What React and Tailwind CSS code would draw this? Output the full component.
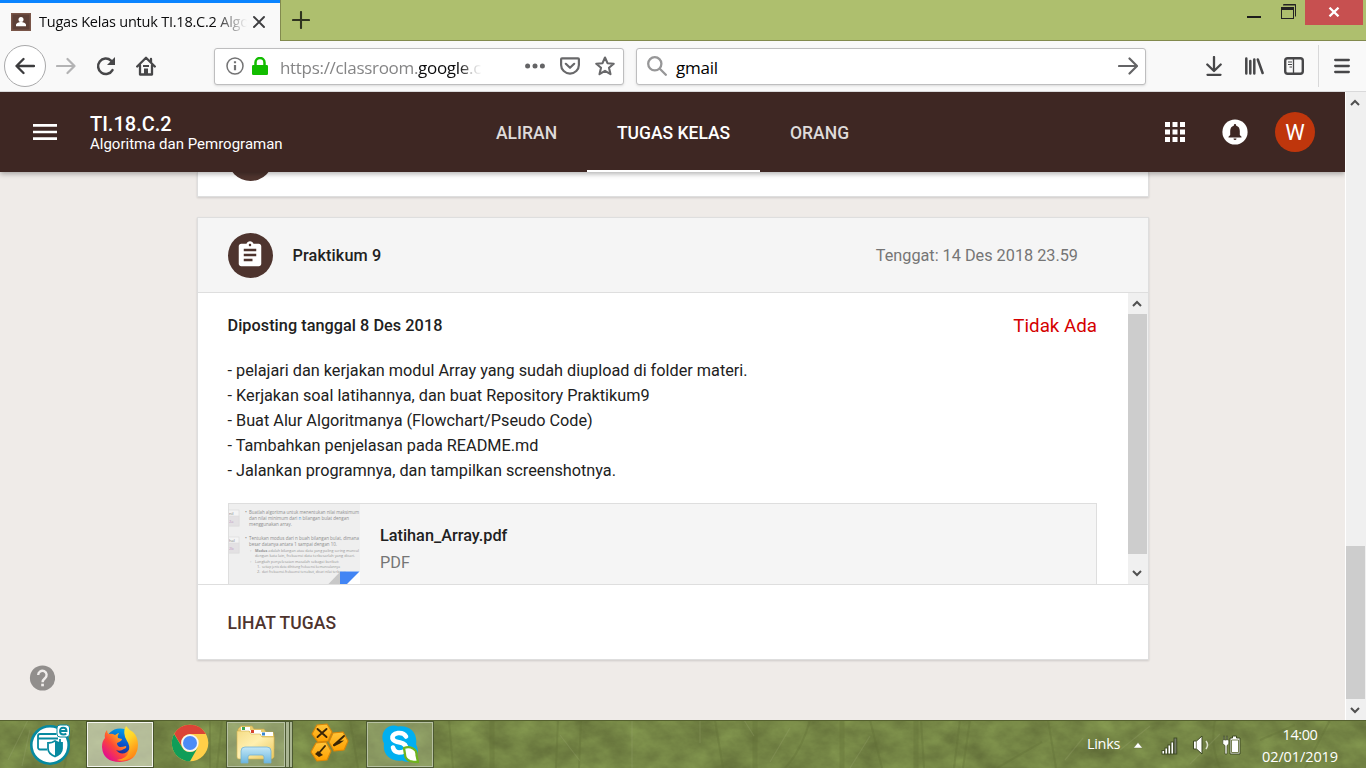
import React from "react";

function TabBar() {
  return (
    <div className="flex h-[41px] bg-[#aebf6e]">
      <div className="flex h-[41px] w-[280px] shrink-0 items-center border-t-[3px] border-[#0a84ff] bg-[#f9f9f9] pl-[11px]">
        <svg width="20" height="18" viewBox="0 0 20 18" className="shrink-0">
          <rect width="20" height="18" fill="#795548" />
          <rect x="1.5" y="1.5" width="17" height="15" fill="#5d4037" />
          <circle cx="10" cy="6.4" r="2.5" fill="#fff" />
          <path d="M5 13.2V12c0-2 3-3 5-3s5 1 5 3v1.200z" fill="#fff" />
        </svg>
        <div className="ml-2 w-[208px] whitespace-nowrap text-[14.5px] leading-5 tracking-[-0.22px] text-[#0c0c0d] [mask-image:linear-gradient(to_right,black_84%,transparent_100%)]">
          Tugas Kelas untuk TI.18.C.2 Algo
        </div>
        <svg width="14" height="14" viewBox="0 0 14 14" className="ml-[5px] shrink-0">
          <path d="M2 2l10 10M12 2L2 12" stroke="#3e3e40" strokeWidth="1.9" strokeLinecap="round" />
        </svg>
      </div>
      <div className="flex flex-1 items-start border-b border-l border-[#828a4e]">
        <svg width="18" height="18" viewBox="0 0 18 18" className="ml-[11px] mt-[11px]">
          <path d="M9 1v16M1 9h16" stroke="#2f331f" strokeWidth="2.1" strokeLinecap="round" />
        </svg>
        <div className="ml-auto flex items-start">
          <svg width="14" height="25" viewBox="0 0 14 25">
            <rect y="16" width="14" height="2" fill="#1d1d1b" />
          </svg>
          <svg width="16" height="25" viewBox="0 0 16 25" className="ml-5">
            <path d="M2.500 4.500h12v12M2 5h13" fill="none" stroke="#222" />
            <rect x=".5" y="7.500" width="12" height="11" fill="none" stroke="#222" />
            <rect x="0" y="7" width="13" height="3" fill="#222" />
          </svg>
          <div className="ml-2 mr-[3px] flex h-[25px] w-[58px] items-center justify-center bg-[#c75050]">
            <svg width="12" height="10" viewBox="0 0 12 10" className="-mt-px -ml-px">
              <path d="M1.500 .7l9 8.600M10.500 .7l-9 8.600" stroke="#fff" strokeWidth="2.300" />
            </svg>
          </div>
        </div>
      </div>
    </div>
  );
}

function Toolbar() {
  return (
    <div className="flex h-[51px] items-center border-b border-[#d9d9da] bg-[#f9f9f9]">
      <div className="ml-1 flex size-[42px] items-center justify-center rounded-full border border-[#a9a9aa] bg-white">
        <svg width="20" height="18" viewBox="0 0 20 18" fill="none" stroke="#3c3c3e" strokeWidth="2.300" strokeLinecap="round" strokeLinejoin="round">
          <path d="M19 9H1.500M8.500 2l-7 7 7 7" />
        </svg>
      </div>
      <svg width="20" height="18" viewBox="0 0 20 18" className="ml-[10px]" fill="none" stroke="#b3b3b4" strokeWidth="2.200" strokeLinecap="round" strokeLinejoin="round">
        <path d="M1 9h17.500M11.500 2l7 7-7 7" />
      </svg>
      <svg width="20" height="20" viewBox="0 0 20 20" className="ml-[20px]">
        <path d="M16.500 14.100A7.700 7.700 0 1 1 15 4.600l2 2" fill="none" stroke="#474749" strokeWidth="2.500" strokeLinecap="round" />
        <path d="M19 1v8h-8z" fill="#474749" />
      </svg>
      <svg width="20" height="20" viewBox="0 0 20 20" className="ml-5">
        <path d="M1.200 10.500L10 1.800l8.800 8.700M4 9.500v9h12v-9M15 3v3" fill="none" stroke="#474749" strokeWidth="2.300" strokeLinecap="round" strokeLinejoin="round" />
        <path d="M8 18v-5.500h4V18M7 9h6v2H7z" fill="#474749" />
      </svg>
      <div className="ml-[58px] flex h-[37px] w-[410px] items-center rounded-[3px] border border-[#bebebf] bg-white shadow-sm">
        <svg width="18" height="18" viewBox="0 0 18 18" className="ml-[11px] shrink-0">
          <circle cx="9" cy="9" r="8" fill="none" stroke="#737374" strokeWidth="1.500" />
          <path d="M9 8v5.200M9 4.300v2" stroke="#737374" strokeWidth="2.200" />
        </svg>
        <svg width="16" height="18" viewBox="0 0 16 18" className="ml-2 shrink-0">
          <rect y="8" width="16" height="10" rx="1.300" fill="#12bc00" />
          <path d="M3.500 9V5.500a4.500 4.500 0 0 1 9 0V9" fill="none" stroke="#12bc00" strokeWidth="2.500" />
        </svg>
        <div className="ml-[12px] mt-[4px] w-[203px] whitespace-nowrap text-[17px] leading-6 tracking-[-0.31px] text-[#858586] [mask-image:linear-gradient(to_right,black_88%,transparent_100%)]">
          https://classroom.<span className="text-[#0c0c0d]">google</span>.c
        </div>
        <svg width="20" height="6" viewBox="0 0 20 6" className="ml-[42px] shrink-0" fill="#646466">
          <circle cx="2.600" cy="3" r="2.500" />
          <circle cx="10" cy="3" r="2.500" />
          <circle cx="17.400" cy="3" r="2.500" />
        </svg>
        <svg width="20" height="18" viewBox="0 0 20 18" className="ml-[15px] shrink-0" fill="none" stroke="#68686a" strokeWidth="2.200" strokeLinecap="round" strokeLinejoin="round">
          <path d="M2 1.300h16q.9 0 .9.900V8A8.900 8.600 0 0 1 1.100 8V2.200q0-.9.900-.900zM5.800 6.800L10 10.800l4.200-4" />
        </svg>
        <svg width="20" height="20" viewBox="0 0 20 20" className="ml-[15px] shrink-0" fill="none" stroke="#68686a" strokeWidth="2.100" strokeLinejoin="round">
          <path d="M10 1.500l2.500 5.700 6.200.6-4.700 4 1.500 6.400L10 14.900l-5.500 3.300L6 11.800l-4.700-4 6.200-.6z" />
        </svg>
      </div>
      <div className="ml-3 flex h-[37px] w-[510px] items-center rounded-[3px] border border-[#bebebf] bg-white shadow-sm">
        <svg width="20" height="20" viewBox="0 0 20 20" className="ml-[10px]" fill="none" stroke="#979798" strokeWidth="2.300" strokeLinecap="round">
          <circle cx="7.800" cy="7.800" r="6.600" />
          <path d="M12.800 12.800l6 6" />
        </svg>
        <div className="ml-[9px] mt-[4px] text-[17px] leading-6 tracking-[-0.25px] text-black">gmail</div>
        <svg width="20" height="18" viewBox="0 0 20 18" className="ml-auto mr-[7px]" fill="none" stroke="#646466" strokeWidth="2.200" strokeLinecap="round" strokeLinejoin="round">
          <path d="M1 9h18M11.500 1.500L19 9l-7.500 7.500" />
        </svg>
      </div>
      <svg width="16" height="20" viewBox="0 0 16 20" className="ml-[60px]" fill="none" stroke="#474749" strokeWidth="2.300" strokeLinecap="round" strokeLinejoin="round">
        <path d="M8 1v13.500M1.300 8.500L8 15l6.700-6.500M1.500 18.800h13" />
      </svg>
      <svg width="20" height="18" viewBox="0 0 20 18" className="ml-[22px]" fill="none" stroke="#474749" strokeWidth="2.500" strokeLinecap="round">
        <path d="M2.300 1.500v15M6.300 4v12.500M10.300 2.500v14M13.800 2.500l4.800 13.500" />
      </svg>
      <svg width="20" height="18" viewBox="0 0 20 18" className="ml-5">
        <rect x="1.200" y="1.200" width="17.600" height="15.600" rx="2.500" fill="none" stroke="#474749" strokeWidth="2.400" />
        <path d="M9.500 1.500v15" stroke="#474749" strokeWidth="1.300" />
        <path d="M4 5h4M4 7.500h4M5.500 10h2.500" stroke="#474749" strokeWidth="1.100" />
      </svg>
      <div className="ml-[14px] h-[42px] w-px bg-[#d8d8d9]" />
      <svg width="16" height="16" viewBox="0 0 16 16" className="ml-[15px]" stroke="#474749" strokeWidth="2.300" strokeLinecap="round">
        <path d="M1.200 2h13.600M1.200 8h13.600M1.200 14h13.600" />
      </svg>
    </div>
  );
}

function Chevron({ down }) {
  return (
    <svg width="10" height="8" viewBox="0 0 10 8" className="mr-0.5 shrink-0">
      <path d={down ? "M1 2l4 4 4-4" : "M1 6l4-4 4 4"} fill="none" stroke="#505050" strokeWidth="2" />
    </svg>
  );
}

function ClassHeader() {
  return (
    <header className="relative z-10 flex h-20 shrink-0 items-center bg-[#3e2723] text-white shadow-[0_2px_5px_rgba(0,0,0,0.3)]">
      <svg width="24" height="16" viewBox="0 0 24 16" className="ml-[33px]" fill="#fff">
        <path d="M0 0h24v2.700H0zM0 6.700h24v2.600H0zM0 13.300h24V16H0z" />
      </svg>
      <div className="ml-[33px] w-[407px] whitespace-nowrap pt-0.5">
        <div className="text-[20px] font-medium leading-[22px]">TI.18.C.2</div>
        <div className="text-[15px] leading-[19px]">Algoritma dan Pemrograman</div>
      </div>
      <nav className="-ml-[31px] flex h-20 text-[17.5px] font-medium text-[#dfdbda]">
        <div className="flex items-center px-[30px] pt-0.5">ALIRAN</div>
        <div className="flex w-[173px] items-center justify-center border-b-2 border-white pt-1 text-white">TUGAS KELAS</div>
        <div className="flex items-center px-[30px] pt-0.5">ORANG</div>
      </nav>
      <div className="ml-auto flex items-center">
        <svg width="20" height="20" viewBox="0 0 20 20" fill="#fff">
          <path d="M0 0h5v5H0zM7.500 0h5v5h-5zM15 0h5v5h-5zM0 7.500h5v5H0zM7.500 7.500h5v5h-5zM15 7.500h5v5h-5zM0 15h5v5H0zM7.500 15h5v5h-5zM15 15h5v5h-5z" />
        </svg>
        <svg width="26" height="26" viewBox="0 0 26 26" className="ml-[37px]">
          <circle cx="13" cy="13" r="12.600" fill="#fff" />
          <path d="M13 5a1.200 1.200 0 0 0-1.200 1.200v.6C9.300 7.400 8.200 9.400 8.200 12v4L6.500 17.700v.8h13v-.8L17.800 16v-4c0-2.600-1.100-4.600-3.600-5.200v-.6A1.200 1.200 0 0 0 13 5zM11.500 19.500a1.500 1.500 0 0 0 3 0z" fill="#3e2723" />
        </svg>
        <div className="ml-[27px] mr-[30px] flex size-10 items-center justify-center rounded-full bg-[#bf360c] text-[22px]">W</div>
      </div>
    </header>
  );
}

const steps = [
  "- pelajari dan kerjakan modul Array yang sudah diupload di folder materi.",
  "- Kerjakan soal latihannya, dan buat Repository Praktikum9",
  "- Buat Alur Algoritmanya (Flowchart/Pseudo Code)",
  "- Tambahkan penjelasan pada README.md",
  "- Jalankan programnya, dan tampilkan screenshotnya.",
];

function Thumbnail() {
  return (
    <svg width="131" height="81" viewBox="0 0 131 81" className="shrink-0 font-['Open_Sans',sans-serif]">
      <rect width="131" height="81" fill="#efefef" />
      <g stroke="#dcdcdc" strokeWidth=".7">
        <rect x="-1" y="6" width="11" height="16" fill="#f4f4f4" />
        <rect x="-1" y="12" width="11" height="10" fill="#e3e1e3" />
        <rect x="-1" y="33" width="11" height="16" fill="#f4f4f4" />
        <rect x="-1" y="39" width="11" height="10" fill="#e3e1e3" />
      </g>
      <g fontSize="4" fill="#777">
        <text x="0" y="11">nil</text>
        <text x="0" y="38">hal</text>
        <text x="0" y="18.500" fill="#c09ac4">2a</text>
        <text x="0" y="45.500" fill="#c09ac4">2b</text>
      </g>
      <g fontSize="4.900" fill="#8c8c8c">
        <text x="16" y="10">•</text>
        <text x="20" y="10" textLength="110" lengthAdjust="spacingAndGlyphs">Buatlah algoritma untuk menentukan nilai maksimum</text>
        <text x="20" y="15.800" textLength="100" lengthAdjust="spacingAndGlyphs">dan nilai minimum dari <tspan fill="#4b9be0">n</tspan> bilangan bulat dengan</text>
        <text x="20" y="21.500" textLength="43" lengthAdjust="spacingAndGlyphs">menggunakan array.</text>
        <text x="16" y="36">•</text>
        <text x="20" y="36" textLength="110" lengthAdjust="spacingAndGlyphs">Tentukan modus dari n buah bilangan bulat, dimana</text>
        <text x="20" y="41.800" textLength="88" lengthAdjust="spacingAndGlyphs">besar datanya antara 1 sampai dengan 10.</text>
      </g>
      <g fontSize="4.100" fill="#949494">
        <text x="21" y="48">◦</text>
        <text x="26" y="48" textLength="104" lengthAdjust="spacingAndGlyphs"><tspan fontWeight="bold">Modus</tspan> adalah bilangan atau data yang paling sering muncul</text>
        <text x="26" y="53" textLength="100" lengthAdjust="spacingAndGlyphs">dengan kata lain, frekuensi data terbesarlah yang dicari.</text>
        <text x="21" y="58.500">◦</text>
        <text x="26" y="58.500" textLength="84" lengthAdjust="spacingAndGlyphs">Langkah penyelesaian masalah sebagai berikut:</text>
        <text x="28" y="63.800">1.</text>
        <text x="33" y="63.800" textLength="78" lengthAdjust="spacingAndGlyphs">setiap jenis data dihitung frekuensi kemunculannya</text>
        <text x="28" y="68.800">2.</text>
        <text x="33" y="68.800" textLength="84" lengthAdjust="spacingAndGlyphs">dari frekuensi-frekuensi tersebut, dicari nilai terbesar</text>
      </g>
      <path d="M98.500 81L111 68v13z" fill="#c8c8c8" />
      <path d="M111 67.500h20V81h-20z" fill="#fff" />
      <path d="M111 67.500h19.500L117 81h-6z" fill="#4285f4" />
    </svg>
  );
}

function AssignmentCard() {
  return (
    <article className="ml-[197px] mt-5 w-[952px] border border-[#dedede] bg-white shadow-[0_1px_2px_rgba(0,0,0,0.14)]">
      <div className="flex h-[75px] items-center border-b border-[#dedede] bg-[#f5f5f5] pl-[30px] pr-[70px] text-[16.25px]">
        <div className="flex size-[45px] items-center justify-center rounded-full bg-[#4e342e]">
          <svg width="30" height="30" viewBox="0 0 24 24" className="-mt-px -ml-px" fill="#fff">
            <path d="M19 3h-4.180C14.400 1.840 13.300 1 12 1c-1.300 0-2.400.84-2.820 2H5c-1.100 0-2 .9-2 2v14c0 1.100.9 2 2 2h14c1.100 0 2-.9 2-2V5c0-1.100-.9-2-2-2zm-7 0c.55 0 1 .45 1 1s-.45 1-1 1-1-.45-1-1 .45-1 1-1zm2 14H7v-2h7v2zm3-4H7v-2h10v2zm0-4H7V7h10v2z" />
          </svg>
        </div>
        <div className="ml-[19.500px] pt-0.5 font-medium tracking-[0.12px] text-[#212121]">Praktikum 9</div>
        <div className="ml-auto pt-0.5 text-[#757575]">Tenggat: 14 Des 2018 23.59</div>
      </div>
      <div className="flex h-[292px] border-b border-[#dedede]">
        <div className="flex-1 overflow-hidden pl-[30px] pr-[31px] text-[16.25px] text-[#212121]">
          <div className="mt-[21px] flex h-[25px] items-center justify-between">
            <div className="-ml-[0.5px] font-medium tracking-[0.04px]">Diposting tanggal 8 Des 2018</div>
            <div className="text-[18.75px] text-[#d50000]">Tidak Ada</div>
          </div>
          <div className="-ml-[0.5px] mt-[19px] leading-[25px]">
            {steps.map((s) => (
              <div key={s}>{s}</div>
            ))}
          </div>
          <div className="mt-5 flex h-[100px] border border-[#dedede] bg-[#f5f5f5]">
            <Thumbnail />
            <div className="ml-5 pt-[18px] leading-[27px]">
              <div className="font-medium">Latihan_Array.pdf</div>
              <div className="text-[#757575]">PDF</div>
            </div>
          </div>
        </div>
        <div className="flex w-5 shrink-0 flex-col items-center bg-[#f0f0f0]">
          <div className="flex h-[21px] items-center"><Chevron /></div>
          <div className="h-[240px] w-[19px] self-start bg-[#cdcdcd]" />
          <div className="flex flex-1 items-center pt-2"><Chevron down /></div>
        </div>
      </div>
      <div className="flex h-[74px] items-center pl-[29.500px] pt-0.5 text-[17.5px] font-medium tracking-[0.06px] text-[#4e342e]">LIHAT TUGAS</div>
    </article>
  );
}

function Page() {
  return (
    <div className="flex h-[628px] font-[Roboto,sans-serif]">
      <main className="relative flex w-[1345px] flex-col overflow-hidden bg-[#efebe8]">
        <ClassHeader />
        <div className="flex-1">
          <div className="ml-[197px] h-[25px] w-[952px] overflow-hidden border-x border-b border-[#dedede] bg-white shadow-[0_1px_2px_rgba(0,0,0,0.14)]">
            <div className="-mt-9 ml-[30px] size-[45px] rounded-full bg-[#4e342e]" />
          </div>
          <AssignmentCard />
        </div>
        <svg width="26" height="26" viewBox="0 0 26 26" className="absolute bottom-[29px] left-[29px]">
          <circle cx="13.500" cy="13" r="12.600" fill="#918e8c" />
          <path d="M9.200 10a4.200 4.200 0 1 1 6.800 3.200c-1.500 1.200-2.400 1.900-2.400 4" fill="none" stroke="#f0edeb" strokeWidth="2.400" />
          <rect x="12.200" y="18.700" width="2.700" height="2.600" fill="#f0edeb" />
        </svg>
      </main>
      <div className="flex w-[21px] flex-col items-center border-l border-white bg-[#f0f0f0]">
        <div className="flex h-[21px] items-center"><Chevron /></div>
        <div className="mt-[433px] h-[153px] w-[19px] self-start bg-[#cdcdcd]" />
        <div className="flex flex-1 items-center"><Chevron down /></div>
      </div>
    </div>
  );
}

function BankIcon() {
  return (
    <svg width="41" height="41" viewBox="0 0 41 41" className="ml-[30px]">
      <circle cx="20" cy="21" r="18.700" fill="#fff" stroke="#078aa0" strokeWidth="2.600" />
      <path d="M17 25.500H10a2 2 0 0 1-2-2V12a2 2 0 0 1 2-2h16.500M8 14.500h20M30 15v3" fill="none" stroke="#078aa0" strokeWidth="1.800" />
      <path d="M25 17q3 2 7 2v5.500q0 5-7 8-7-3-7-8V19q4 0 7-2z" fill="#fff" stroke="#078aa0" strokeWidth="1.800" />
      <path d="M25 17q3 2 7 2v5.500q0 5-7 8z" fill="#078aa0" />
      <rect x="27" y="1" width="12.500" height="12" rx="3" fill="#fff" stroke="#078aa0" />
      <path d="M30 7h6.500q0-3.300-3.300-3.300T30 7.200q0 3.300 3.500 3.300 1.800 0 2.700-1" fill="none" stroke="#078aa0" strokeWidth="1.900" />
    </svg>
  );
}

function FirefoxIcon() {
  return (
    <svg width="38" height="38" viewBox="0 0 38 38" className="-mt-0.5">
      <defs>
        <linearGradient id="fx" x1=".9" y1=".1" x2=".1" y2=".8">
          <stop offset="0" stopColor="#fff44f" />
          <stop offset=".35" stopColor="#ffa520" />
          <stop offset=".65" stopColor="#ff4a35" />
          <stop offset="1" stopColor="#e3108b" />
        </linearGradient>
        <linearGradient id="fy" x1="0" y1="0" x2=".5" y2="1">
          <stop offset="0" stopColor="#fff044" />
          <stop offset=".5" stopColor="#ffd62a" />
          <stop offset="1" stopColor="#ff8a16" />
        </linearGradient>
        <linearGradient id="fb" x1=".7" y1="0" x2=".4" y2="1">
          <stop offset="0" stopColor="#00a4ea" />
          <stop offset=".5" stopColor="#0a56cc" />
          <stop offset="1" stopColor="#25187c" />
        </linearGradient>
      </defs>
      <circle cx="19" cy="18" r="14.500" fill="url(#fb)" />
      <path d="M6 5q0 3 2 4 3-1 6 1 3-2 4-2-2 3-1 5l4 1q0 2-5 4 0 3 3 4 3 0 6-1 1 2-2 3-4 3-8 1 5 6 11 2 6-5 2-13 8 3 8 9 0 13-17 14Q2 37 1 22q0-6 3-9-1-5 2-8z" fill="url(#fx)" />
      <path d="M25 1q3 4 7 6 5 5 5 13 0 10-9 14-6 3-12 1 10-1 12-9 1-6-2-10-5-8-1-15z" fill="url(#fy)" />
    </svg>
  );
}

function ChromeIcon() {
  return (
    <svg width="38" height="38" viewBox="-19 -19 38 38">
      <circle r="18.300" fill="#ffcf48" />
      <path d="M-15.800-9.200A18.300 18.300 0 0 1 15.900-9H0A9 9 0 0 0-8 4z" fill="#db4437" />
      <path d="M-15.900-9A18.300 18.300 0 0 0 0 18.300L7.800 4.500A9 9 0 0 1-7.800 4.500z" fill="#109d58" />
      <circle r="8.700" fill="#f5f5f5" />
      <circle r="7" fill="#4c8bf5" />
    </svg>
  );
}

function FolderIcon() {
  return (
    <svg width="40" height="40" viewBox="0 0 40 40" className="-mt-0.5">
      <defs>
        <linearGradient id="fd" x1="0" y1="0" x2="1" y2="1">
          <stop offset="0" stopColor="#f5dc86" />
          <stop offset=".45" stopColor="#fff0b0" />
          <stop offset="1" stopColor="#e9c75c" />
        </linearGradient>
        <linearGradient id="fl" x1="0" y1="0" x2="0" y2="1">
          <stop offset="0" stopColor="#c4e8f7" />
          <stop offset="1" stopColor="#6cb6df" />
        </linearGradient>
      </defs>
      <path d="M3 4l2-2h11l2 3h10l2 3h7l1 3v14H2V5z" fill="#e9cb6c" stroke="#c8a84d" strokeWidth=".6" />
      <path d="M5 3h9v4H5zM14 6h11v4H14zM25 8h12v4H25z" fill="#fff" />
      <path d="M6 3h3v3H6z" fill="#3ea452" /><path d="M15 6h3v3h-3z" fill="#d64530" /><path d="M26 8.500h3v3h-3z" fill="#3b88cf" />
      <path d="M1 7h12l2 3h9l2 3h12v20q-1 2-3 2H3q-2 0-2-2z" fill="url(#fd)" stroke="#d4b353" strokeWidth=".6" />
      <path d="M5 39V27q0-4 4-4h22q4 0 4 4v12h-7v-6q0-2-2-2H14q-2 0-2 2v6z" fill="url(#fl)" stroke="#74b3d5" strokeWidth=".8" />
    </svg>
  );
}

function HexIcon() {
  return (
    <svg width="40" height="40" viewBox="0 0 40 40" className="-mt-0.5 ml-[17px]">
      <defs>
        <linearGradient id="hx" x1="0" y1="0" x2="0" y2="1">
          <stop offset="0" stopColor="#ffc53a" />
          <stop offset="1" stopColor="#ffa000" />
        </linearGradient>
      </defs>
      <g fill="url(#hx)" stroke="#dc8606" strokeWidth="1.100" strokeLinejoin="round">
        <path d="M7 2l10-1 5 8-4 9-10 1-6-8z" />
        <path d="M23 10l10-1 5 9-4 9-10 1-5-9z" />
        <path d="M6 20l10-1 5 9-4 9-10 1-6-9z" />
      </g>
      <g stroke="#3a2506" strokeWidth="1.900" strokeLinecap="round" fill="none">
        <path d="M7.500 6l9 8M16.500 6l-9 8M15 23l-6 7M24 22l10-9" />
      </g>
      <path d="M5 31l3-3 5 4-4 2zM23 22l6-4 5-.5-4 3-6 3z" fill="#3a2506" />
    </svg>
  );
}

function SkypeIcon() {
  return (
    <svg width="38" height="40" viewBox="0 0 38 40">
      <path d="M8 1.500q5-2 9 0c12-2 20 7 18 18 3 5 2 11-1 14-4 4-9 4-13 2C10 37 1 29 3 18.500 0 13 1 5 8 1.500z" fill="#00aff0" />
      <path d="M25 11.500q-2-4-8-3.500-6 1-5.500 5.500 1 3 7.500 4 6.500 1.500 6 6-1 4-7 4-5-.5-6-5" fill="none" stroke="#fff" strokeWidth="4.600" strokeLinecap="round" />
      <path d="M23 23q5-2 9 .5 4 2 3.500 6.500l1.500 7q-5 0-8-1-5-2-5-6.500z" fill="#fff" stroke="#6fb41f" strokeWidth="2.300" strokeLinejoin="round" />
    </svg>
  );
}

function TaskbarTexture() {
  return (
    <svg width="1366" height="48" viewBox="0 0 1366 48" className="absolute inset-0">
      <defs>
        <filter id="grass" x="0" y="0" width="100%" height="100%" colorInterpolationFilters="sRGB">
          <feTurbulence type="fractalNoise" baseFrequency="0.035 0.05" numOctaves="5" seed="7" />
          <feColorMatrix values="0.18 0 0 0 0.365  0.22 0 0 0 0.41  0.12 0 0 0 0.21  0 0 0 0 1" />
        </filter>
      </defs>
      <rect width="1366" height="48" fill="#748446" />
      <rect width="1366" height="48" filter="url(#grass)" />
      <g fill="none" stroke="#626f36" strokeOpacity=".35" strokeWidth="2">
        <path d="M449 0l4 48M558 0l-2 48M581 0l-2 48M715 0l8 48M810 0q-8 30-25 48M870 0l12 48M921 0l3 48M960 0l-6 48M970 0l-7 48M1048 0l8 48M1042 22l-45 26M1215 0q-5 25 5 48M1330 0l-25 48M1260 20l35-15" />
        <path d="M492 0v48M755 0v48M842 0v48M916 0v48" strokeWidth="5" />
        <path d="M222 0l-5 48M72 10l-8 38M210 0v48M350 0l8 48" />
      </g>
      <g fill="none" stroke="#a3ad7c" strokeOpacity=".22" strokeWidth="1.200">
        <path d="M560 15l20 26M700 0v23M744 0l10 16M790 8l-20 34M850 48l20-32M632 0v48M1065 40l18-22M1120 30l30-24M1190 44l30-30M30 10l-8 36M8 40L28 0" />
      </g>
      <rect width="1366" height="1" fill="#55612f" />
    </svg>
  );
}

function Taskbar() {
  return (
    <footer className="relative h-12 text-white">
      <TaskbarTexture />
      <div className="relative flex h-12 items-center">
        <BankIcon />
        <div className="ml-[15px] mt-px flex h-[47px] w-[68px] items-center justify-center border border-[#46522b] bg-[#d8dcc8]/65 shadow-[inset_0_0_0_1px_#f4f5ee]">
          <FirefoxIcon />
        </div>
        <div className="ml-[17px] -mt-0.5"><ChromeIcon /></div>
        <div className="ml-[17px] mt-px flex h-[47px] w-[67px]">
          <div className="flex w-[60px] items-center justify-center border border-[#4c5932] bg-[#c0cba8]/40 shadow-[inset_0_0_0_1px_#b7c1a2]"><FolderIcon /></div>
          <div className="w-1 border-y border-r border-[#4c5932] bg-[#aab592]" />
          <div className="w-[3px] border-y border-r border-[#4c5932] bg-[#aab592]" />
        </div>
        <HexIcon />
        <div className="ml-4 mt-px flex h-[47px] w-[68px] items-center justify-center border border-[#4c5932] bg-[#b5bf98]/35 shadow-[inset_0_0_0_1px_#b7c1a2]">
          <SkypeIcon />
        </div>
        <div className="ml-auto flex items-center text-[14.5px] tracking-[-0.35px]">
          <span>Links</span>
          <svg width="10" height="7" viewBox="0 0 10 7" className="ml-[13px] mt-0.5"><path d="M5 .5L9.500 6H.5z" fill="#fff" stroke="#55642f" strokeWidth=".4" /></svg>
          <svg width="17" height="18" viewBox="0 0 17 18" className="ml-[18px] mt-[3px]">
            <g fill="#fff" stroke="#3c4822" strokeWidth=".9">
              <rect x="1" y="13.500" width="2.600" height="3.500" /><rect x="4" y="11" width="2.600" height="6" /><rect x="7" y="8" width="2.600" height="9" /><rect x="10" y="5" width="2.600" height="12" /><rect x="13" y="1" width="2.800" height="16" fill="#777d6d" />
            </g>
          </svg>
          <svg width="18" height="20" viewBox="0 0 18 20" className="ml-[14px] mt-0.5">
            <path d="M1.500 6h3L10 1v18l-5.500-5h-3z" fill="#fff" stroke="#3c4822" />
            <path d="M4.300 6v8" stroke="#7b8265" />
            <path d="M14 6q3 4 0 8" fill="none" stroke="#dbe0ca" strokeWidth="1.500" />
          </svg>
          <svg width="19" height="20" viewBox="0 0 19 20" className="ml-[12px] mt-0.5">
            <path d="M1.500 1h1v4h2V1h1v4h1.300v4L5 10.500V19H3v-8.500L.8 9V5h.7z" fill="#fff" stroke="#3c4822" strokeWidth=".7" />
            <path d="M10.500 1h4v2h3.500v16H8V3h2.500z" fill="#fff" stroke="#3c4822" />
            <path d="M9.500 5h7v12.500h-7z" fill="none" stroke="#68733f" strokeWidth=".9" />
          </svg>
          <div className="ml-[17px] mr-[24px] w-[84px] pt-[3px] text-center leading-[22px] tracking-[-0.1px]">
            <div className="tracking-[-0.4px]">14:00</div>
            <div>02/01/2019</div>
          </div>
        </div>
      </div>
    </footer>
  );
}

export default function App() {
  return (
    <div className="h-[768px] w-[1366px] overflow-hidden bg-[#efebe8] font-['Open_Sans','Noto_Sans',sans-serif]">
      <TabBar />
      <Toolbar />
      <Page />
      <Taskbar />
    </div>
  );
}
